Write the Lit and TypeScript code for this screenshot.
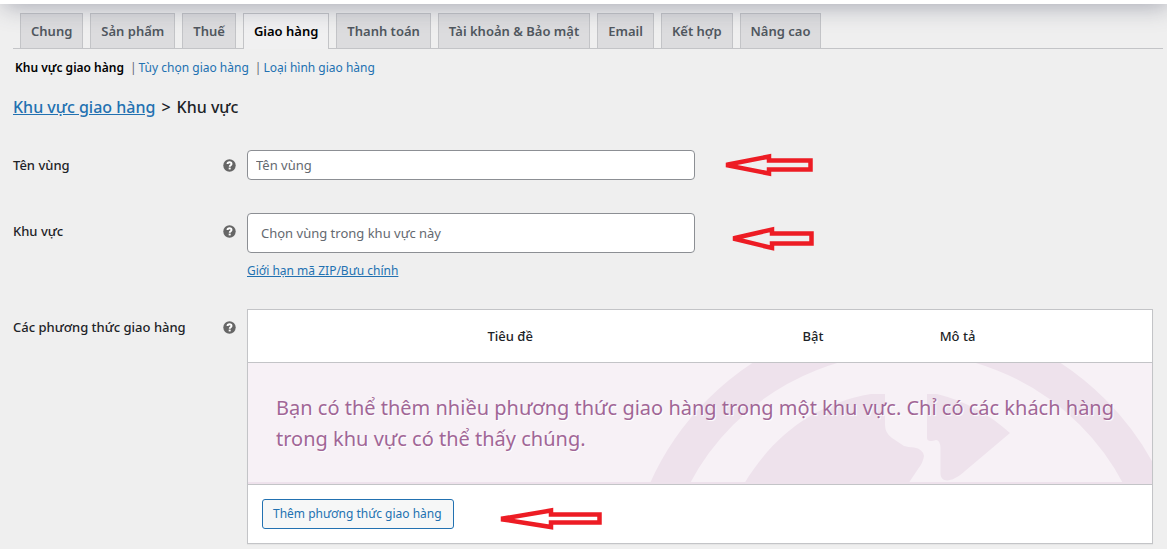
import { LitElement, html, css, svg } from "lit";
import { customElement, property } from "lit/decorators.js";

@customElement("help-tip")
class HelpTip extends LitElement {
  @property() label = "";

  static styles = css`
    :host {
      display: block;
      flex: none;
      width: 13px;
      height: 13px;
    }
    .icon {
      display: block;
      width: 13px;
      height: 13px;
    }
  `;

  render() {
    return html`<svg class="icon" viewBox="0 0 13 13" role="img" aria-label=${this.label}>
      <circle cx="6.5" cy="6.5" r="6.2" fill="#666" />
      <path
        d="M4.5 5.1C4.5 3.8 5.4 3.3 6.6 3.3S8.500 3.9 8.500 4.900C8.500 6.200 6.700 6.200 6.700 7.800"
        fill="none"
        stroke="#fff"
        stroke-width="1.9"
      />
      <rect x="5.7" y="8.6" width="2" height="1.8" fill="#fff" />
    </svg>`;
  }
}

const TABS = [
  "Chung",
  "Sản phẩm",
  "Thuế",
  "Giao hàng",
  "Thanh toán",
  "Tài khoản & Bảo mật",
  "Email",
  "Kết hợp",
  "Nâng cao",
];
const ACTIVE_TAB = "Giao hàng";

const arrow = (name: string, w: number, h: number, d: string) => html`
  <svg class="arrow ${name}" width=${w} height=${h} viewBox="0 0 ${w} ${h}" aria-hidden="true">
    ${svg`<path d=${d} fill="none" stroke="#ed1c24" stroke-width="4.5" stroke-linejoin="miter" stroke-miterlimit="4" />`}
  </svg>
`;

@customElement("app-root")
class AppRoot extends LitElement {
  static styles = css`
    :host {
      display: block;
      min-height: 100vh;
      box-sizing: border-box;
      border-top: 4px solid #fff;
      background: #efefef;
      color: #1d2327;
      font: 13px/20px "Noto Sans", "Open Sans", sans-serif;
      position: relative;
      overflow: hidden;
    }
    *,
    *::before {
      box-sizing: border-box;
    }
    a {
      color: #2271b1;
    }
    .shade {
      position: absolute;
      inset: -24px 0 auto 6px;
      height: 24px;
      box-shadow: 0 0 24px 2px rgba(60, 64, 90, 0.42);
      pointer-events: none;
    }
    .tabs {
      display: flex;
      gap: 7px;
      margin: 0 4px 0 13px;
      padding: 9px 0 0 7px;
      border-bottom: 1px solid #c3c4c7;
    }
    .tab {
      padding: 5px 10px;
      border: 1px solid #c3c4c7;
      border-bottom: 0;
      background: #dcdcde;
      color: #50575e;
      font-weight: 600;
      line-height: 24px;
      height: 35px;
      text-decoration: none;
      white-space: nowrap;
    }
    .tab.active {
      height: 36px;
      margin-bottom: -1px;
      background: #f0f0f1;
      color: #000;
    }
    .sections {
      display: flex;
      margin: 9px 15px 0;
      font-size: 12px;
    }
    .sections a {
      text-decoration: none;
    }
    .sections .current {
      color: #000;
      font-weight: 600;
    }
    .bar {
      margin: 0 2px 0 6px;
      color: #646970;
    }
    h2 {
      display: flex;
      gap: 6px;
      margin: 17px 13px 0;
      font-size: 16px;
      line-height: 24px;
      font-weight: 500;
    }
    .row {
      position: relative;
      display: grid;
      grid-template-columns: 234px minmax(0, 1fr);
      margin: 0 14px 0 13px;
    }
    .name {
      margin-top: 31px;
    }
    .region {
      margin-top: 33px;
    }
    .methods {
      margin-top: 28px;
    }
    .head {
      display: flex;
      justify-content: space-between;
      align-items: center;
      height: 20px;
      margin-top: 8px;
      padding-right: 11px;
      font-weight: 500;
    }
    .name .head {
      margin-top: 5px;
    }
    input {
      display: block;
      width: 448px;
      max-width: 100%;
      height: 30px;
      margin: 0;
      padding: 0 8px;
      border: 1px solid #8c8f94;
      border-radius: 4px;
      background: #fff;
      color: #2c3338;
      font: inherit;
    }
    input::placeholder {
      color: #646970;
      opacity: 1;
    }
    .region input {
      height: 40px;
      padding: 0 13px;
    }
    .zip {
      display: inline-block;
      margin-top: 8px;
      font-size: 12px;
    }
    table {
      width: 100%;
      table-layout: fixed;
      border: 1px solid #c3c4c7;
      border-spacing: 0;
      background: #fff;
      box-shadow: 0 1px 1px rgba(0, 0, 0, 0.04);
    }
    th,
    td {
      padding: 0;
    }
    th {
      height: 52px;
      font-weight: 500;
    }
    .title {
      width: 58%;
    }
    .enabled {
      width: 9%;
    }
    .desc {
      padding-left: 86px;
      text-align: left;
    }
    .blank {
      position: relative;
      padding: 29px 28px 30px;
      border-top: 1px solid #c3c4c7;
      border-bottom: 1px solid #c3c4c7;
      box-shadow: inset 0 -2px 0 #eee2ec;
      background: #f7f1f6;
      overflow: hidden;
    }
    .globe {
      position: absolute;
      right: 0;
      top: 0;
      width: 504px;
      height: 121px;
    }
    .blank p {
      position: relative;
      margin: 0;
      color: #a16696;
      font-size: 20px;
      line-height: 31px;
      text-shadow: 1px 1px 1px #fff;
    }
    .foot {
      padding: 14px;
    }
    button {
      display: block;
      height: 30px;
      padding: 0 11px 0 10px;
      border: 1px solid #2271b1;
      border-radius: 3px;
      background: #f6f7f7;
      color: #2271b1;
      font: inherit;
      font-size: 12px;
    }
    .arrow {
      position: absolute;
    }
    .a1 {
      left: 712px;
      top: 3px;
    }
    .a2 {
      left: 718px;
      top: 12px;
    }
    .a3 {
      left: 487px;
      bottom: 13px;
    }
  `;

  render() {
    return html`
      <nav class="tabs">
        ${TABS.map((t) => html`<a class="tab ${t === ACTIVE_TAB ? "active" : ""}" href="#">${t}</a>`)}
      </nav>
      <div class="shade"></div>
      <nav class="sections">
        <a class="current" href="#">Khu vực giao hàng</a><span class="bar">|</span>
        <a href="#">Tùy chọn giao hàng</a><span class="bar">|</span>
        <a href="#">Loại hình giao hàng</a>
      </nav>
      <h2><a href="#">Khu vực giao hàng</a><span>&gt;</span><span>Khu vực</span></h2>

      <div class="row name">
        <div class="head"><label for="zone-name">Tên vùng</label><help-tip label="Tên vùng"></help-tip></div>
        <div><input id="zone-name" type="text" placeholder="Tên vùng" /></div>
        ${arrow("a1", 90, 24, "M3 11.5L44 3.5V7.5H85.500V16.500H44V20.500L3 12.500Z")}
      </div>

      <div class="row region">
        <div class="head"><label for="zone-region">Khu vực</label><help-tip label="Khu vực"></help-tip></div>
        <div>
          <input id="zone-region" type="text" placeholder="Chọn vùng trong khu vực này" />
          <a class="zip" href="#">Giới hạn mã ZIP/Bưu chính</a>
        </div>
        ${arrow("a2", 86, 28, "M4 13L41 4.500V8.500H80.500V18.500H41V23L4 14Z")}
      </div>

      <div class="row methods">
        <div class="head"><span id="methods">Các phương thức giao hàng</span><help-tip label="Các phương thức giao hàng"></help-tip></div>
        <table aria-labelledby="methods">
          <thead>
            <tr>
              <th class="title" scope="col">Tiêu đề</th>
              <th class="enabled" scope="col">Bật</th>
              <th class="desc" scope="col">Mô tả</th>
            </tr>
          </thead>
          <tbody>
            <tr>
              <td class="blank" colspan="3">
                <svg class="globe" viewBox="648 363 504 121" aria-hidden="true">
                  <circle cx="906.5" cy="598" r="263" fill="none" stroke="#eee2ec" stroke-width="36" />
                  <path
                    fill="#eee2ec"
                    d="M744 484C772 437 815 403 871 394H885V425Q885 433 892 438L904 446Q908 447 914 447.500Q923 449 924 456Q923 463 918 469L908 484ZM927 394H937C966 401 990 415 1010 433L965 471C952 483 941 483 940.500 474V448Q940 440 936 440C930 442 927 441 927 438Z"
                  />
                </svg>
                <p>Bạn có thể thêm nhiều phương thức giao hàng trong một khu vực. Chỉ có các khách hàng trong khu vực có thể thấy chúng.</p>
              </td>
            </tr>
          </tbody>
          <tfoot>
            <tr>
              <td class="foot" colspan="3"><button type="button">Thêm phương thức giao hàng</button></td>
            </tr>
          </tfoot>
        </table>
        ${arrow("a3", 104, 24, "M3 11.500L51 3.500V7.500H99.500V15.500H51V20L3 12.500Z")}
      </div>
    `;
  }
}
